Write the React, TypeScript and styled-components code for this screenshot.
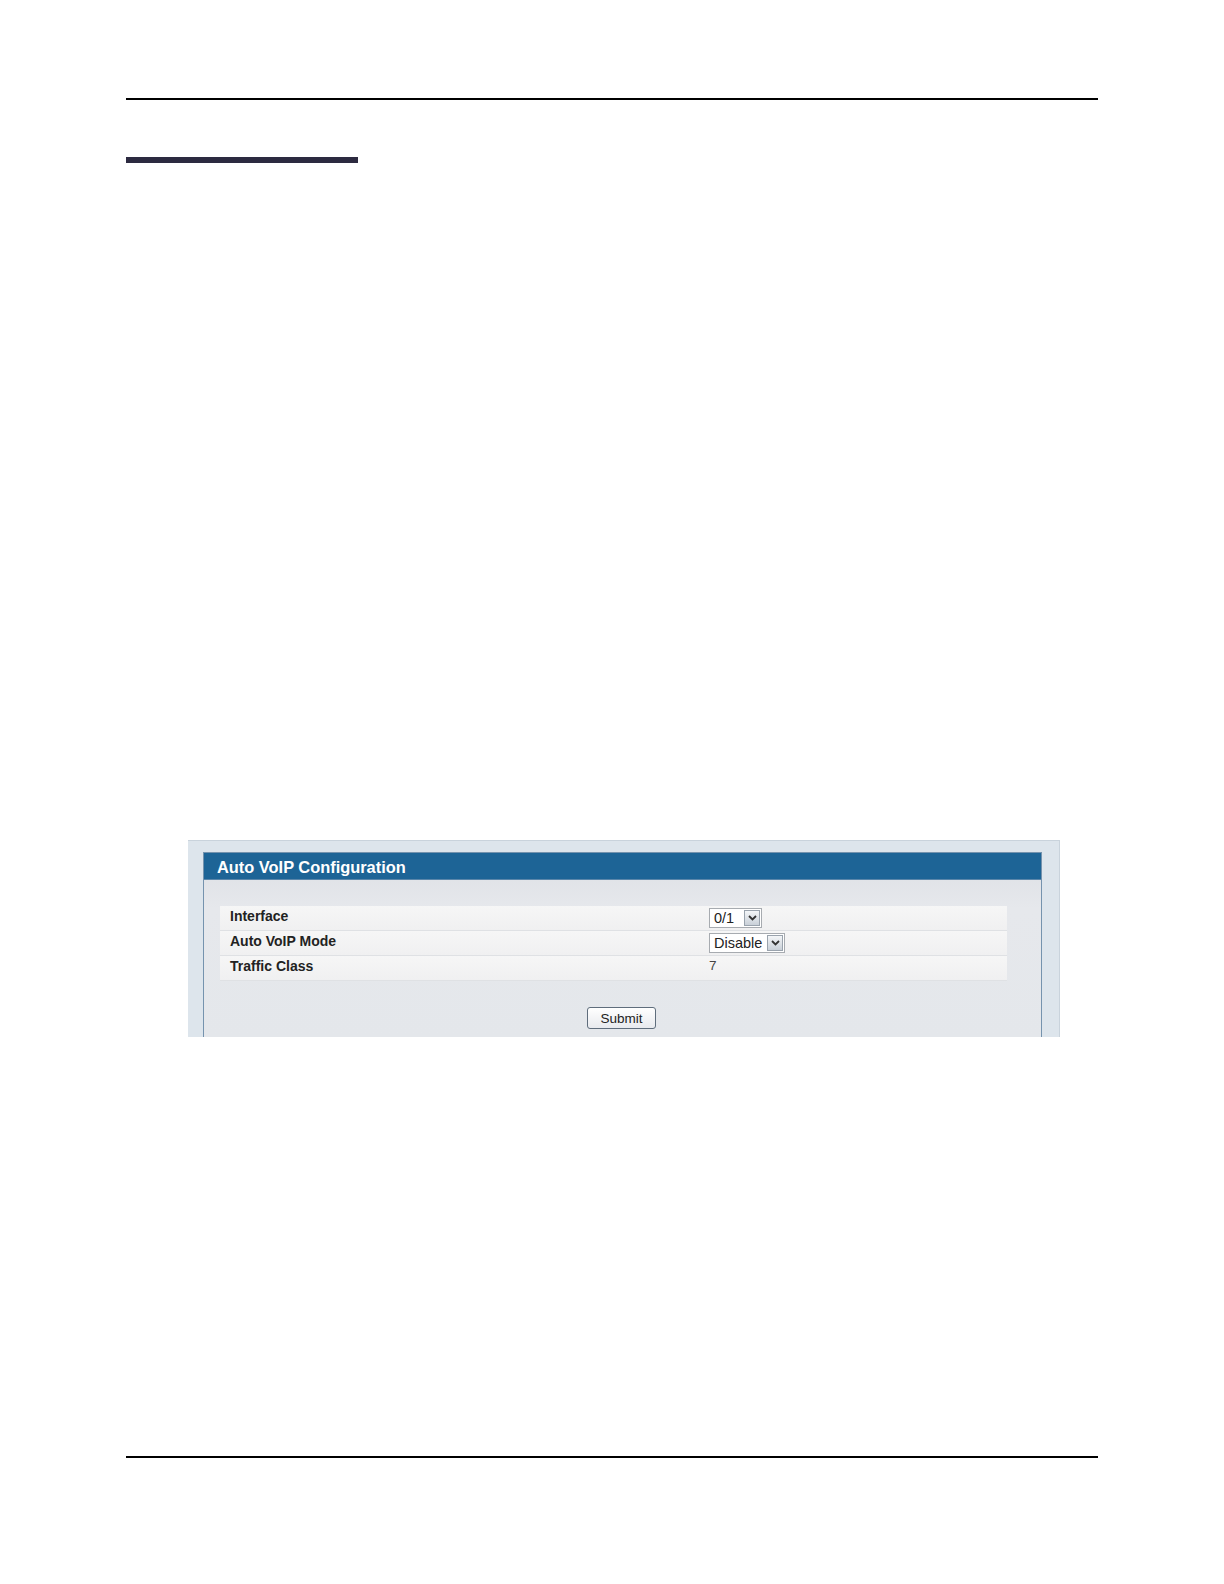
import styled, { createGlobalStyle } from 'styled-components';

const GlobalStyle = createGlobalStyle`
  html, body {
    margin: 0;
    padding: 0;
    background: #ffffff;
    overflow: hidden;
  }
  body {
    font-family: "Liberation Sans", Arial, sans-serif;
  }
`;

const Page = styled.div`
  box-sizing: border-box;
  padding: 98px 126px 0 126px;
  display: flex;
  flex-direction: column;
`;

const Rule = styled.div<{ $top: number }>`
  height: 2px;
  margin-top: ${({ $top }) => $top}px;
  background: #000000;
`;

const SectionBar = styled.div`
  width: 232px;
  height: 6px;
  margin-top: 57px;
  background: #2c2a40;
`;

const Figure = styled.div`
  margin: 677px 0 0 62px;
  width: 872px;
  height: 197px;
  box-sizing: border-box;
  background: #dde5ec;
  border-top: 1px solid #c9d3dc;
  border-right: 1px solid #c9d3dc;
  padding: 11px 17px 0 15px;
  display: flex;
`;

const Panel = styled.div`
  flex: 1;
  border: 1px solid #7593ae;
  border-bottom: none;
  background: linear-gradient(#dcdfe4, #e6e8ec 30%, #e4e7eb);
  display: flex;
  flex-direction: column;
`;

const PanelHeader = styled.div`
  height: 26px;
  background: #1d6496;
  border-bottom: 1px solid #5a86aa;
  color: #ffffff;
  font-weight: bold;
  font-size: 16.4px;
  line-height: 28px;
  padding-left: 13px;
`;

const Table = styled.div`
  margin: 26px 34px 0 16px;
  display: flex;
  flex-direction: column;
`;

const Row = styled.div`
  height: 24px;
  display: grid;
  grid-template-columns: 485px 1fr;
  background: linear-gradient(#f6f6f6, #f0f0f1);
  border-bottom: 1px solid #dfe1e4;
`;

const Label = styled.div`
  font-size: 14px;
  font-weight: bold;
  color: #222222;
  padding-left: 10px;
  line-height: 20px;
`;

const Value = styled.div`
  display: flex;
  align-items: flex-start;
  padding-left: 4px;
  padding-top: 2px;
  color: #333333;
`;

const Select = styled.div<{ $w: number }>`
  width: ${({ $w }) => $w}px;
  height: 20px;
  box-sizing: border-box;
  border: 1px solid #a7abb0;
  background: #ffffff;
  display: flex;
  align-items: center;
  justify-content: space-between;
  font-size: 14.5px;
  color: #222222;
  padding-left: 4px;
`;

const Arrow = styled.div`
  width: 16px;
  height: 16px;
  margin-right: 1px;
  box-sizing: border-box;
  border: 1px solid #9aa3ad;
  background: linear-gradient(#f4f6f8, #c9d0d8);
  display: flex;
  align-items: center;
  justify-content: center;
`;

const Plain = styled.span`
  font-size: 13.5px;
  line-height: 16px;
  color: #444444;
`;

const Footer = styled.div`
  display: flex;
  justify-content: center;
  margin-top: 26px;
  padding-right: 2px;
`;

const Button = styled.button`
  width: 69px;
  height: 22px;
  border: 1px solid #5f6d7c;
  border-radius: 3px;
  background: linear-gradient(#ffffff, #e8eaee);
  font-family: "Liberation Sans", Arial, sans-serif;
  font-size: 13.5px;
  color: #222222;
  padding: 0;
`;

function Chevron() {
  return (
    <svg width="9" height="6" viewBox="0 0 9 6">
      <path d="M1 1 L4.5 4.5 L8 1" fill="none" stroke="#333" strokeWidth="1.8" />
    </svg>
  );
}

export default function App() {
  return (
    <>
      <GlobalStyle />
      <Page>
        <Rule $top={0} />
        <SectionBar />
        <Figure>
          <Panel>
            <PanelHeader>Auto VoIP Configuration</PanelHeader>
            <Table>
              <Row>
                <Label>Interface</Label>
                <Value>
                  <Select $w={53}>
                    0/1
                    <Arrow>
                      <Chevron />
                    </Arrow>
                  </Select>
                </Value>
              </Row>
              <Row>
                <Label>Auto VoIP Mode</Label>
                <Value>
                  <Select $w={76}>
                    Disable
                    <Arrow>
                      <Chevron />
                    </Arrow>
                  </Select>
                </Value>
              </Row>
              <Row>
                <Label>Traffic Class</Label>
                <Value>
                  <Plain>7</Plain>
                </Value>
              </Row>
            </Table>
            <Footer>
              <Button>Submit</Button>
            </Footer>
          </Panel>
        </Figure>
        <Rule $top={419} />
      </Page>
    </>
  );
}
